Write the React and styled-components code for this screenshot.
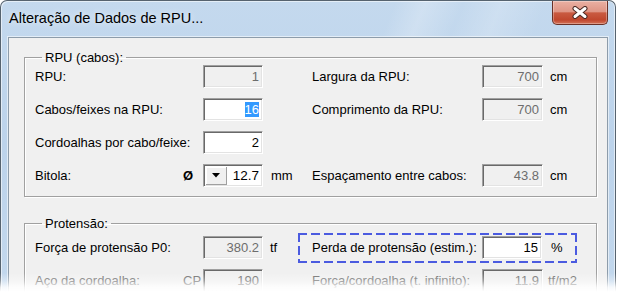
import React from 'react';
import styled, { createGlobalStyle } from 'styled-components';

const Global = createGlobalStyle`
  html, body { margin: 0; padding: 0; background: #fff; width: 619px; height: 299px; overflow: hidden; }
  #root { width: 619px; height: 299px; position: relative; overflow: hidden; }
`;

const FONT = `"Liberation Sans", Arial, sans-serif`;

const Window = styled.div`
  width: 616px;
  height: 360px;
  box-sizing: border-box;
  border: 1px solid #56636f;
  border-bottom: none;
  border-radius: 7px 7px 0 0;
  padding: 0 7px;
  display: flex;
  flex-direction: column;
  background:
    linear-gradient(112deg, transparent 0 52%, rgba(255,255,255,0.22) 56%, transparent 61%, rgba(255,255,255,0.18) 66%, transparent 72%),
    linear-gradient(180deg, #c4d9ee 0%, #bcd3eb 40%, #c6daee 100%);
  box-shadow: inset 1px 1px 0 rgba(255,255,255,0.55), inset -1px 0 0 rgba(255,255,255,0.55);
`;

const TitleBar = styled.div`
  height: 36px;
  display: flex;
  justify-content: space-between;
  align-items: flex-start;
`;

const Title = styled.div`
  font-family: ${FONT};
  font-size: 14.5px;
  line-height: 18px;
  color: #000;
  padding: 8px 0 0 1px;
  text-shadow: 0 0 6px rgba(255,255,255,0.8);
`;

const CloseBtn = styled.div`
  width: 56px;
  height: 24px;
  box-sizing: border-box;
  border: 1px solid #6a3127;
  border-top: none;
  border-radius: 0 0 5px 5px;
  background: linear-gradient(180deg, #eab0a3 0%, #df9585 46%, #c95a41 52%, #c0472e 82%, #d47257 100%);
  box-shadow: inset 0 0 0 1px rgba(255,255,255,0.3);
  display: flex;
  align-items: center;
  justify-content: center;
`;

const Client = styled.div`
  flex: 1;
  background: #f0f0f0;
  border: 1px solid #8d9caa;
  box-shadow: 0 0 0 1px rgba(255,255,255,0.55);
  padding: 12px 10px 0 15px;
  display: flex;
  flex-direction: column;
  gap: 19px;
  font-family: ${FONT};
  font-size: 13px;
  color: #000;
`;

const Group = styled.fieldset`
  margin: 0;
  min-width: 0;
  border: 1px solid #a0a0a0;
  box-shadow: inset 1px 1px 0 #fff, 1px 1px 0 #fff;
  padding: ${p => p.$pt || 0}px 10px 9px 10px;
  display: flex;
  flex-direction: column;
  gap: 10px;
`;

const Legend = styled.legend`
  margin-left: 7px;
  padding: 0 3px;
  line-height: 15px;
  font-size: 13px;
  color: #000;
`;

const Row = styled.div`
  display: grid;
  grid-template-columns: 148px 20px 60px 49px 170px 61px 1fr;
  align-items: center;
  height: 23px;
`;

const Label = styled.div`
  grid-column: ${p => p.$col || 1};
  white-space: nowrap;
  color: ${p => (p.$disabled ? '#6d6d6d' : '#000')};
`;

const Prefix = styled.div`
  grid-column: 2;
  text-align: right;
  padding-right: ${p => p.$pr ?? 3}px;
  color: ${p => (p.$disabled ? '#6d6d6d' : '#000')};
  font-weight: ${p => (p.$bold ? 700 : 400)};
`;

const Field = styled.div`
  grid-column: ${p => p.$col || 3};
  width: ${p => p.$w || 60}px;
  height: 23px;
  box-sizing: border-box;
  border-top: 1px solid #a0a0a0;
  border-left: 1px solid #a0a0a0;
  border-bottom: 1px solid #fff;
  border-right: 1px solid #fff;
  box-shadow: inset 1px 1px 0 #696969, inset -1px -1px 0 #e3e3e3;
  background: ${p => (p.$disabled ? '#f0f0f0' : '#fff')};
  color: ${p => (p.$disabled ? '#6d6d6d' : '#000')};
  text-align: right;
  padding: 0 3px 0 2px;
  line-height: 21px;
  font-size: 13px;
`;

const Selected = styled.span`
  background: #3399ff;
  color: #fff;
`;

const Unit = styled.div`
  grid-column: ${p => p.$col || 4};
  padding-left: ${p => p.$pl ?? 7}px;
  white-space: nowrap;
  color: ${p => (p.$disabled ? '#6d6d6d' : '#000')};
`;

const Combo = styled.div`
  grid-column: 3;
  width: 60px;
  height: 23px;
  box-sizing: border-box;
  display: flex;
  border-top: 1px solid #a0a0a0;
  border-left: 1px solid #a0a0a0;
  border-bottom: 1px solid #fff;
  border-right: 1px solid #fff;
  box-shadow: inset 1px 1px 0 #696969, inset -1px -1px 0 #e3e3e3;
  background: #fff;
  padding: 2px 1px 1px 2px;
`;

const DropBtn = styled.div`
  width: 21px;
  box-sizing: border-box;
  background: #f0f0f0;
  border-right: 1px solid #a0a0a0;
  border-bottom: 1px solid #a0a0a0;
  box-shadow: inset 1px 1px 0 #fff;
  display: flex;
  align-items: center;
  justify-content: center;
`;

const ComboValue = styled.div`
  flex: 1;
  text-align: right;
  padding-right: 2px;
  line-height: 18px;
  font-size: 13.5px;
`;

const FocusGroup = styled.div`
  grid-column: 5 / 8;
  display: grid;
  grid-template-columns: 170px 61px 1fr;
  align-items: center;
  position: relative;
  height: 23px;
  &::after {
    content: '';
    position: absolute;
    top: -3px;
    bottom: -4px;
    left: -14px;
    width: 279px;
    pointer-events: none;
    background:
      repeating-linear-gradient(90deg, #4b5be0 0 9px, transparent 9px 13px) left top / 100% 2px no-repeat,
      repeating-linear-gradient(90deg, #4b5be0 0 9px, transparent 9px 13px) left bottom / 100% 2px no-repeat,
      repeating-linear-gradient(180deg, #4b5be0 0 9px, transparent 9px 13px) left top / 2px 100% no-repeat,
      repeating-linear-gradient(180deg, #4b5be0 0 9px, transparent 9px 13px) right top / 2px 100% no-repeat;
  }
`;

const Fade = styled.div`
  position: absolute;
  left: 0;
  right: 0;
  bottom: 0;
  height: 26px;
  pointer-events: none;
  background: linear-gradient(180deg, rgba(255,255,255,0) 0%, rgba(255,255,255,0.35) 30%, rgba(255,255,255,0.85) 55%, #fff 72%, #fff 100%);
`;

const CloseIcon = () => (
  <svg width="18" height="13" viewBox="0 0 18 13">
    <path d="M4 2.5 L14 10.5 M14 2.5 L4 10.5" stroke="#4a2a24" strokeWidth="5" strokeLinecap="round" />
    <path d="M4 2.5 L14 10.5 M14 2.5 L4 10.5" stroke="#fff" strokeWidth="3" strokeLinecap="round" />
  </svg>
);

const DownArrow = () => (
  <svg width="8" height="5" viewBox="0 0 8 5">
    <path d="M0 0 H8 L4 4.5 Z" fill="#000" />
  </svg>
);

export default function App() {
  return (
    <>
      <Global />
      <Window>
        <TitleBar>
          <Title>Alteração de Dados de RPU...</Title>
          <CloseBtn>
            <CloseIcon />
          </CloseBtn>
        </TitleBar>
        <Client>
          <Group>
            <Legend>RPU (cabos):</Legend>
            <Row>
              <Label>RPU:</Label>
              <Field $disabled>1</Field>
              <Label $col={5}>Largura da RPU:</Label>
              <Field $col={6} $w={61} $disabled>700</Field>
              <Unit $col={7}>cm</Unit>
            </Row>
            <Row>
              <Label>Cabos/feixes na RPU:</Label>
              <Field><Selected>16</Selected></Field>
              <Label $col={5}>Comprimento da RPU:</Label>
              <Field $col={6} $w={61} $disabled>700</Field>
              <Unit $col={7}>cm</Unit>
            </Row>
            <Row>
              <Label>Cordoalhas por cabo/feixe:</Label>
              <Field>2</Field>
            </Row>
            <Row>
              <Label>Bitola:</Label>
              <Prefix $pr={11} $bold>Ø</Prefix>
              <Combo>
                <DropBtn><DownArrow /></DropBtn>
                <ComboValue>12.7</ComboValue>
              </Combo>
              <Unit $pl={8}>mm</Unit>
              <Label $col={5}>Espaçamento entre cabos:</Label>
              <Field $col={6} $w={61} $disabled>43.8</Field>
              <Unit $col={7}>cm</Unit>
            </Row>
          </Group>
          <Group $pt={5}>
            <Legend>Protensão:</Legend>
            <Row>
              <Label>Força de protensão P0:</Label>
              <Field $disabled>380.2</Field>
              <Unit>tf</Unit>
              <FocusGroup>
                <Label>Perda de protensão (estim.):</Label>
                <Field $col={2} $w={60}>15</Field>
                <Unit $col={3} $pl={8}>%</Unit>
              </FocusGroup>
            </Row>
            <Row>
              <Label $disabled>Aço da cordoalha:</Label>
              <Prefix $disabled>CP</Prefix>
              <Field $disabled>190</Field>
              <Label $col={5} $disabled>Força/cordoalha (t. infinito):</Label>
              <Field $col={6} $w={61} $disabled>11.9</Field>
              <Unit $col={7} $pl={5} $disabled>tf/m2</Unit>
            </Row>
          </Group>
        </Client>
      </Window>
      <Fade />
    </>
  );
}
